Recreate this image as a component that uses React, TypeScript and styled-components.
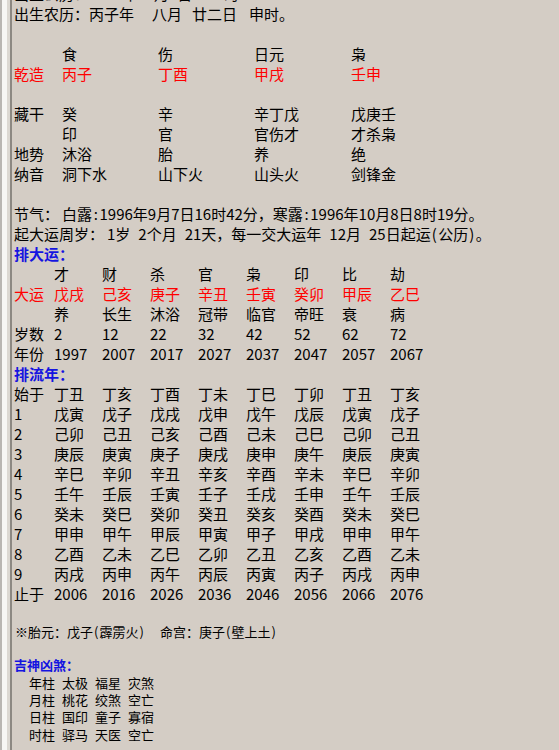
import React from "react";
import styled, { createGlobalStyle } from "styled-components";

const GlobalStyle = createGlobalStyle`
  html, body { margin: 0; padding: 0; background: #d4cdc5; }
  body { font-family: "Noto Sans CJK SC", "Noto Sans", sans-serif; }
`;

const Window = styled.div`
  display: flex;
  width: 559px;
  height: 750px;
  overflow: hidden;
  background: #d4cdc5;
`;

const Gutter = styled.div`
  flex: 0 0 12px;
  box-sizing: border-box;
  border-left: 2px solid #b9b6b2;
  border-right: 2px solid #8c8882;
  background: linear-gradient(to right, #f7f6f4 5px, #dcd8d2 5px);
`;

const Viewport = styled.div`
  flex: 1;
  overflow: hidden;
  padding-left: 2px;
`;

const Scroll = styled.div`
  margin-top: -16px;
  color: #000;
  font-size: 15px;
  line-height: 20px;
`;

const Line = styled.div`
  height: 20px;
  white-space: nowrap;
`;

const Blank = styled.div`
  height: 20px;
`;

const Heading = styled.div<{ $small?: boolean }>`
  height: ${(p) => (p.$small ? "17.3px" : "20px")};
  font-weight: bold;
  color: #1414e0;
  font-size: ${(p) => (p.$small ? "13px" : "15px")};
`;

const PillarRow = styled.div<{ $red?: boolean }>`
  display: grid;
  grid-template-columns: 48px 96px 96px 97px 96px;
  height: 20px;
  white-space: nowrap;
  color: ${(p) => (p.$red ? "#f00" : "#000")};
`;

const LuckRow = styled.div`
  display: grid;
  grid-template-columns: 40px repeat(8, 48px);
  height: 20px;
  white-space: nowrap;
`;

const Cell = styled.span<{ $red?: boolean }>`
  color: ${(p) => (p.$red ? "#f00" : "inherit")};
`;

const Gap = styled.span<{ $w: number }>`
  display: inline-block;
  width: ${(p) => p.$w}px;
`;

/* half-width ASCII punctuation, as the fixed-width source font draws it */
const Half = styled.span`
  display: inline-block;
  width: 0.5em;
  text-align: center;
`;

const Small = styled.div`
  margin-top: 19.4px;
  font-size: 13px;
  line-height: 17.3px;
`;

const SmallLine = styled.div`
  height: 17.3px;
  white-space: nowrap;
  margin-bottom: 15.7px;
  padding-left: 1px;
`;

const ShenRow = styled.div`
  display: grid;
  grid-template-columns: repeat(4, 33px);
  padding-left: 15px;
  height: 17.3px;
  white-space: nowrap;
`;

const pillars = {
  gods: ["", "食", "伤", "日元", "枭"],
  stems: ["丙子", "丁酉", "甲戌", "壬申"],
  hidden: ["藏干", "癸", "辛", "辛丁戊", "戊庚壬"],
  hiddenGods: ["", "印", "官", "官伤才", "才杀枭"],
  stage: ["地势", "沐浴", "胎", "养", "绝"],
  nayin: ["纳音", "洞下水", "山下火", "山头火", "剑锋金"],
};

const luck = {
  gods: ["", "才", "财", "杀", "官", "枭", "印", "比", "劫"],
  pillars: ["戊戌", "己亥", "庚子", "辛丑", "壬寅", "癸卯", "甲辰", "乙巳"],
  stage: ["", "养", "长生", "沐浴", "冠带", "临官", "帝旺", "衰", "病"],
  age: ["岁数", "2", "12", "22", "32", "42", "52", "62", "72"],
  year: ["年份", "1997", "2007", "2017", "2027", "2037", "2047", "2057", "2067"],
};

const flowYears: string[][] = [
  ["始于", "丁丑", "丁亥", "丁酉", "丁未", "丁巳", "丁卯", "丁丑", "丁亥"],
  ["1", "戊寅", "戊子", "戊戌", "戊申", "戊午", "戊辰", "戊寅", "戊子"],
  ["2", "己卯", "己丑", "己亥", "己酉", "己未", "己巳", "己卯", "己丑"],
  ["3", "庚辰", "庚寅", "庚子", "庚戌", "庚申", "庚午", "庚辰", "庚寅"],
  ["4", "辛巳", "辛卯", "辛丑", "辛亥", "辛酉", "辛未", "辛巳", "辛卯"],
  ["5", "壬午", "壬辰", "壬寅", "壬子", "壬戌", "壬申", "壬午", "壬辰"],
  ["6", "癸未", "癸巳", "癸卯", "癸丑", "癸亥", "癸酉", "癸未", "癸巳"],
  ["7", "甲申", "甲午", "甲辰", "甲寅", "甲子", "甲戌", "甲申", "甲午"],
  ["8", "乙酉", "乙未", "乙巳", "乙卯", "乙丑", "乙亥", "乙酉", "乙未"],
  ["9", "丙戌", "丙申", "丙午", "丙辰", "丙寅", "丙子", "丙戌", "丙申"],
  ["止于", "2006", "2016", "2026", "2036", "2046", "2056", "2066", "2076"],
];

const shensha: string[][] = [
  ["年柱", "太极", "福星", "灾煞"],
  ["月柱", "桃花", "绞煞", "空亡"],
  ["日柱", "国印", "童子", "寡宿"],
  ["时柱", "驿马", "天医", "空亡"],
];

const Row5 = ({ cells, red }: { cells: string[]; red?: boolean }) => (
  <PillarRow $red={red}>
    {cells.map((c, i) => (
      <Cell key={i}>{c}</Cell>
    ))}
  </PillarRow>
);

const Row9 = ({ cells, red }: { cells: string[]; red?: boolean }) => (
  <LuckRow>
    {cells.map((c, i) => (
      <Cell key={i} $red={red}>
        {c}
      </Cell>
    ))}
  </LuckRow>
);

export default function App() {
  return (
    <>
      <GlobalStyle />
      <Window>
        <Gutter />
        <Viewport>
          <Scroll>
            <Line>
              出生公历：1996年10月3日<Gap $w={15} />16时
            </Line>
            <Line>
              出生农历：丙子年<Gap $w={18} />八月<Gap $w={10} />廿二日<Gap $w={12} />申时。
            </Line>
            <Blank />
            <Row5 cells={pillars.gods} />
            <Row5 cells={["乾造", ...pillars.stems]} red />
            <Blank />
            <Row5 cells={pillars.hidden} />
            <Row5 cells={pillars.hiddenGods} />
            <Row5 cells={pillars.stage} />
            <Row5 cells={pillars.nayin} />
            <Blank />
            <Line>
              节气：<Gap $w={3} />白露<Half>:</Half>1996年9月7日16时42分，寒露<Half>:</Half>1996年10月8日8时19分。
            </Line>
            <Line>
              起大运周岁：<Gap $w={3} />1岁<Gap $w={8} />2个月<Gap $w={8} />21天，每一交大运年<Gap $w={8} />12月<Gap $w={8} />25日起运<Half>(</Half>公历<Half>)</Half>。
            </Line>
            <Heading>排大运：</Heading>
            <Row9 cells={luck.gods} />
            <Row9 cells={["大运", ...luck.pillars]} red />
            <Row9 cells={luck.stage} />
            <Row9 cells={luck.age} />
            <Row9 cells={luck.year} />
            <Heading>排流年：</Heading>
            {flowYears.map((r, i) => (
              <Row9 key={i} cells={r} />
            ))}
            <Small>
              <SmallLine>
                ※胎元：戊子<Half>(</Half>霹雳火<Half>)</Half>
                <Gap $w={15} />
                命宫：庚子<Half>(</Half>壁上土<Half>)</Half>
              </SmallLine>
              <Heading $small>吉神凶煞：</Heading>
              {shensha.map((r, i) => (
                <ShenRow key={i}>
                  {r.map((c, j) => (
                    <Cell key={j}>{c}</Cell>
                  ))}
                </ShenRow>
              ))}
            </Small>
          </Scroll>
        </Viewport>
      </Window>
    </>
  );
}
